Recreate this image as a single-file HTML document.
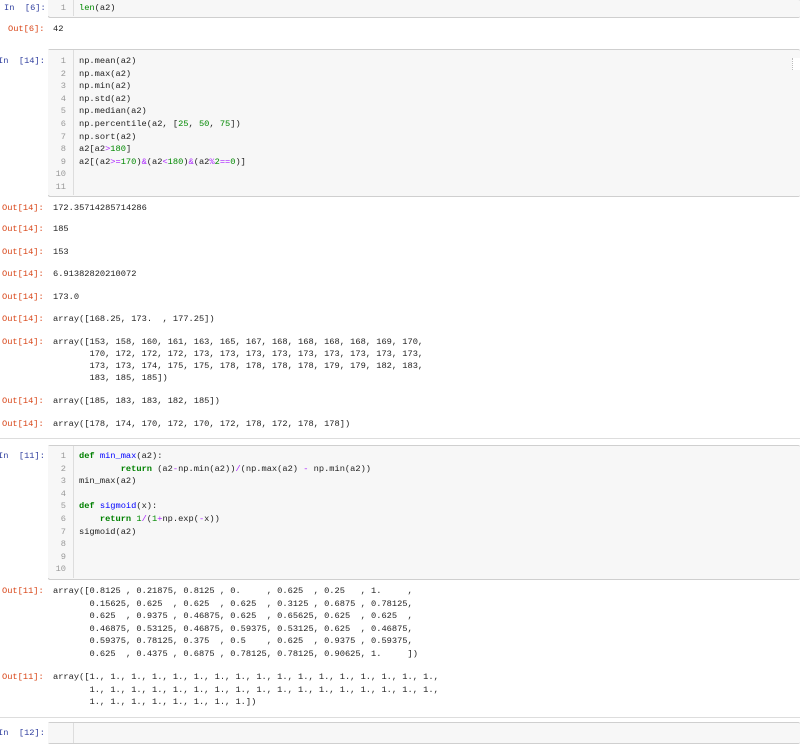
<!DOCTYPE html>
<html><head><meta charset="utf-8"><style>
body{margin:0;width:800px;height:730px;background:#fff;position:relative;overflow:hidden;font-family:"Liberation Mono","Noto Sans CJK SC",monospace;font-size:8.7px;color:#222}
.box{position:absolute;left:48px;right:0;background:#f7f7f7;border:1px solid #cfcfcf;border-right:none;border-radius:2px}
.gut{position:absolute;left:48px;width:25px;border-right:1px solid #ddd;background:#f7f7f7}
.l{position:absolute;white-space:pre;line-height:12px}
.in{color:#303f9f}.out{color:#d84315}
.n{color:#999;width:20px;text-align:right;left:46px}
.k{color:#008000;font-weight:bold}.f{color:#0000ff}.g{color:#080}.o{color:#aa22ff}
.hr{position:absolute;left:0;right:0;height:1px;background:#ddd}
</style></head><body>
<div class="box" style="top:-1px;height:17px"></div>
<div class="gut" style="top:0;height:16px"></div>
<div class="l in" style="left:4px;top:2px">In  [6]:</div>
<div class="l n" style="top:2px">1</div>
<div class="l" style="left:79px;top:2px"><span class="g">len</span>(a2)</div>
<div class="l out" style="left:8px;top:23px">Out[6]:</div>
<div class="l" style="left:53px;top:23px">42</div>

<div class="box" style="top:49px;height:146px"></div>
<div class="gut" style="top:50px;height:145px"></div>
<div class="l in" style="left:-2px;top:55px">In  [14]:</div>
<div class="l n" style="top:55px;line-height:12.6px">1
2
3
4
5
6
7
8
9
10
11</div>
<div class="l" style="left:79px;top:55px;line-height:12.6px">np.mean(a2)
np.max(a2)
np.min(a2)
np.std(a2)
np.median(a2)
np.percentile(a2, [<span class="g">25</span>, <span class="g">50</span>, <span class="g">75</span>])
np.sort(a2)
a2[a2<span class="o">&gt;</span><span class="g">180</span>]
a2[(a2<span class="o">&gt;=</span><span class="g">170</span>)<span class="o">&amp;</span>(a2<span class="o">&lt;</span><span class="g">180</span>)<span class="o">&amp;</span>(a2<span class="o">%</span><span class="g">2</span><span class="o">==</span><span class="g">0</span>)]</div>
<div style="position:absolute;left:792px;top:58px;width:8px;height:12px;border-left:1px dotted #bbb;background:#fff"></div>

<div class="l out" style="left:2px;top:202px">Out[14]:</div><div class="l" style="left:53px;top:202px">172.35714285714286</div>
<div class="l out" style="left:2px;top:223px">Out[14]:</div><div class="l" style="left:53px;top:223px">185</div>
<div class="l out" style="left:2px;top:246px">Out[14]:</div><div class="l" style="left:53px;top:246px">153</div>
<div class="l out" style="left:2px;top:268px">Out[14]:</div><div class="l" style="left:53px;top:268px">6.91382820210072</div>
<div class="l out" style="left:2px;top:291px">Out[14]:</div><div class="l" style="left:53px;top:291px">173.0</div>
<div class="l out" style="left:2px;top:313px">Out[14]:</div><div class="l" style="left:53px;top:313px">array([168.25, 173.  , 177.25])</div>
<div class="l out" style="left:2px;top:336px">Out[14]:</div><div class="l" style="left:53px;top:336px">array([153, 158, 160, 161, 163, 165, 167, 168, 168, 168, 168, 169, 170,
       170, 172, 172, 172, 173, 173, 173, 173, 173, 173, 173, 173, 173,
       173, 173, 174, 175, 175, 178, 178, 178, 178, 179, 179, 182, 183,
       183, 185, 185])</div>
<div class="l out" style="left:2px;top:395px">Out[14]:</div><div class="l" style="left:53px;top:395px">array([185, 183, 183, 182, 185])</div>
<div class="l out" style="left:2px;top:418px">Out[14]:</div><div class="l" style="left:53px;top:418px">array([178, 174, 170, 172, 170, 172, 178, 172, 178, 178])</div>

<div class="hr" style="top:438px"></div>
<div class="box" style="top:445px;height:133px"></div>
<div class="gut" style="top:446px;height:132px"></div>
<div class="l in" style="left:-2px;top:450px">In  [11]:</div>
<div class="l n" style="top:450px;line-height:12.6px">1
2
3
4
5
6
7
8
9
10</div>
<div class="l" style="left:79px;top:450px;line-height:12.6px"><span class="k">def</span> <span class="f">min_max</span>(a2):
        <span class="k">return</span> (a2<span class="o">-</span>np.min(a2))<span class="o">/</span>(np.max(a2) <span class="o">-</span> np.min(a2))
min_max(a2)

<span class="k">def</span> <span class="f">sigmoid</span>(x):
    <span class="k">return</span> <span class="g">1</span><span class="o">/</span>(<span class="g">1</span><span class="o">+</span>np.exp(<span class="o">-</span>x))
sigmoid(a2)</div>

<div class="l out" style="left:2px;top:585px">Out[11]:</div><div class="l" style="left:53px;top:585px;line-height:12.5px">array([0.8125 , 0.21875, 0.8125 , 0.     , 0.625  , 0.25   , 1.     ,
       0.15625, 0.625  , 0.625  , 0.625  , 0.3125 , 0.6875 , 0.78125,
       0.625  , 0.9375 , 0.46875, 0.625  , 0.65625, 0.625  , 0.625  ,
       0.46875, 0.53125, 0.46875, 0.59375, 0.53125, 0.625  , 0.46875,
       0.59375, 0.78125, 0.375  , 0.5    , 0.625  , 0.9375 , 0.59375,
       0.625  , 0.4375 , 0.6875 , 0.78125, 0.78125, 0.90625, 1.     ])</div>
<div class="l out" style="left:2px;top:671px">Out[11]:</div><div class="l" style="left:53px;top:671px;line-height:12.5px">array([1., 1., 1., 1., 1., 1., 1., 1., 1., 1., 1., 1., 1., 1., 1., 1., 1.,
       1., 1., 1., 1., 1., 1., 1., 1., 1., 1., 1., 1., 1., 1., 1., 1., 1.,
       1., 1., 1., 1., 1., 1., 1., 1.])</div>

<div class="hr" style="top:717px"></div>
<div class="box" style="top:722px;height:20px"></div>
<div class="gut" style="top:723px;height:20px"></div>
<div class="l in" style="left:-2px;top:727px">In  [12]:</div>
</body></html>
